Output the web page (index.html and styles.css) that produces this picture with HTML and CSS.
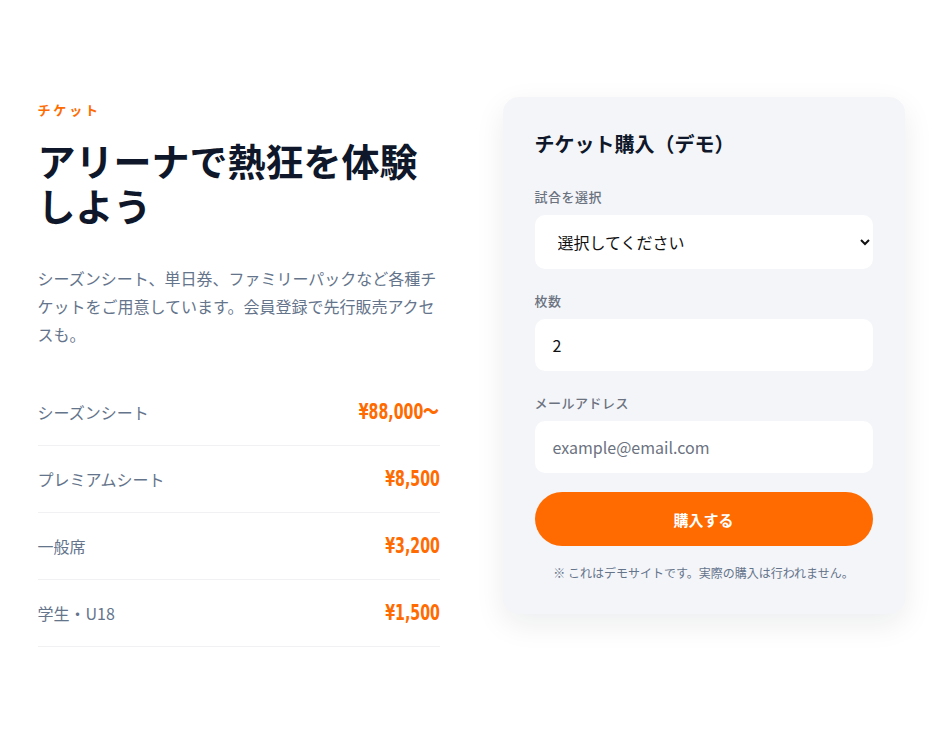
FILE: index.html
```html
<!DOCTYPE html>
<html lang="ja">
<head>
    <meta charset="UTF-8">
    <meta name="viewport" content="width=device-width, initial-scale=1.0">
    <title>チケット</title>
    <link rel="stylesheet" href="styles.css">
</head>
<body>

    <section class="tickets">
        <div class="tickets-info">
            <p class="eyebrow">チケット</p>
            <h1>アリーナで熱狂を体験しよう</h1>
            <p class="lead">シーズンシート、単日券、ファミリーパックなど各種チケットをご用意しています。会員登録で先行販売アクセスも。</p>

            <ul class="price-list">
                <li><span>シーズンシート</span><strong>¥88,000〜</strong></li>
                <li><span>プレミアムシート</span><strong>¥8,500</strong></li>
                <li><span>一般席</span><strong>¥3,200</strong></li>
                <li><span>学生・U18</span><strong>¥1,500</strong></li>
            </ul>
        </div>

        <div class="purchase-card">
            <h2>チケット購入（デモ）</h2>
            <form id="purchaseForm">
                <div class="field">
                    <label for="match">試合を選択</label>
                    <select id="match" name="match">
                        <option>選択してください</option>
                    </select>
                </div>
                <div class="field">
                    <label for="qty">枚数</label>
                    <input type="number" id="qty" name="qty" value="2" min="1">
                </div>
                <div class="field">
                    <label for="email">メールアドレス</label>
                    <input type="email" id="email" name="email" placeholder="example@email.com">
                </div>
                <button type="submit">購入する</button>
            </form>
            <p class="note">※ これはデモサイトです。実際の購入は行われません。</p>
        </div>
    </section>

</body>
</html>
```

FILE: styles.css
```css
body {
    margin: 0;
    font-family: "Noto Sans CJK JP", "Noto Sans", sans-serif;
    background-color: #fff;
    color: #0f172a;
}

.tickets {
    display: grid;
    grid-template-columns: 1fr 1fr;
    gap: 63px;
    align-items: start;
    max-width: 867px;
    margin: 0 auto;
    padding: 97px 0 80px;
}

.eyebrow {
    margin: 3px 0 0;
    font-size: 13px;
    font-weight: 700;
    line-height: 20px;
    letter-spacing: 0.22em;
    color: #ff6b00;
}

h1 {
    margin: 17px 0 0;
    font-size: 38px;
    font-weight: 700;
    line-height: 45px;
    color: #0f172a;
}

.lead {
    margin: 37px 0 0;
    font-size: 16px;
    line-height: 28px;
    color: #64748b;
}

.price-list {
    list-style: none;
    margin: 31px 0 0;
    padding: 0;
}

.price-list li {
    display: flex;
    justify-content: space-between;
    align-items: center;
    padding: 20px 0;
    line-height: 26px;
    border-bottom: 1px solid #f1f1f3;
}

.price-list span {
    font-size: 16px;
    color: #64748b;
}

/* narrow display digits for the prices */
.price-list strong {
    display: inline-block;
    font-family: "DejaVu Sans", sans-serif;
    font-stretch: condensed;
    font-size: 21px;
    font-weight: 700;
    color: #ff6b00;
    transform: scaleX(0.75);
    transform-origin: right center;
}

.purchase-card {
    background-color: #f4f5f8;
    border-radius: 16px;
    box-shadow: 0 10px 30px rgba(15, 23, 42, 0.08);
    padding: 32px;
}

h2 {
    margin: 0 0 28px;
    font-size: 20px;
    font-weight: 700;
    line-height: 30px;
}

.field {
    margin-bottom: 22px;
}

.field:last-of-type {
    margin-bottom: 0;
}

label {
    display: block;
    margin-bottom: 8px;
    font-size: 13px;
    font-weight: 500;
    line-height: 20px;
    letter-spacing: 0.04em;
    color: #6b7280;
}

select,
input {
    display: block;
    box-sizing: border-box;
    width: 100%;
    height: 52px;
    padding: 0 18px;
    border: none;
    border-radius: 10px;
    background-color: #fff;
    font-family: inherit;
    font-size: 16px;
    color: #111;
    outline: none;
}

select {
    height: 54px;
    padding-left: 19px;
    padding-right: 6px;
}

input::placeholder {
    color: #6b7280;
}

input[type="number"]::-webkit-inner-spin-button {
    -webkit-appearance: none;
}

button {
    display: block;
    width: 100%;
    height: 54px;
    margin-top: 19px;
    border: none;
    border-radius: 27px;
    background-color: #ff6b00;
    color: #fff;
    font-family: inherit;
    font-size: 15px;
    font-weight: 700;
    cursor: pointer;
}

.note {
    margin: 18px 0 0;
    font-size: 12px;
    line-height: 18px;
    text-align: center;
    color: #64748b;
}
```
